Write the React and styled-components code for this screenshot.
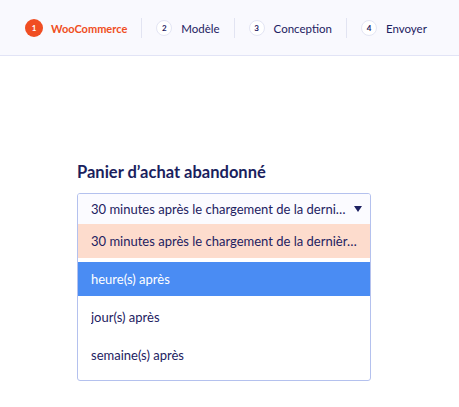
import React from "react";
import styled, { createGlobalStyle } from "styled-components";

const GlobalStyle = createGlobalStyle`
  body {
    margin: 0;
    background: #ffffff;
    font-family: Lato, "Liberation Sans", sans-serif;
    color: #1d2161;
  }
`;

const Page = styled.div`
  width: 459px;
  height: 407px;
  overflow: hidden;
`;

const Stepper = styled.nav`
  height: 56px;
  box-sizing: border-box;
  display: flex;
  align-items: center;
  padding: 1px 0 0 25px;
  background: #f9f9fe;
  border-bottom: 1px solid #e2e4f6;
`;

const Step = styled.div`
  display: flex;
  align-items: center;
  gap: ${({ $active }) => ($active ? "8px" : "9px")};
  font-size: ${({ $active }) => ($active ? "11px" : "11.5px")};
  font-weight: ${({ $active }) => ($active ? 700 : 400)};
  color: ${({ $active }) => ($active ? "#f04e23" : "#1d2161")};
`;

const Badge = styled.span`
  width: ${({ $active }) => ($active ? "18px" : "16px")};
  height: ${({ $active }) => ($active ? "18px" : "16px")};
  box-sizing: border-box;
  border-radius: 50%;
  display: flex;
  align-items: center;
  justify-content: center;
  font-size: 8px;
  font-weight: 700;
  background: ${({ $active }) => ($active ? "#f04e23" : "#ffffff")};
  color: ${({ $active }) => ($active ? "#ffffff" : "#1d2161")};
  border: ${({ $active }) => ($active ? "none" : "1.5px solid #e3e5f4")};
`;

const Divider = styled.span`
  width: 1px;
  height: 20px;
  margin: 0 14px;
  background: #e2e4f2;
`;

const Content = styled.main`
  padding: 106px 0 0 77px;
`;

const Title = styled.h2`
  margin: 0 0 11px;
  font-size: 16.5px;
  font-weight: 700;
  color: #1b1f5e;
`;

const Select = styled.div`
  width: 294px;
  box-sizing: border-box;
  border: 1px solid #b4c1ee;
  border-radius: 3px;
  overflow: hidden;
  padding-bottom: 8px;
  background: #ffffff;
`;

const Current = styled.div`
  height: 30px;
  display: flex;
  align-items: center;
  justify-content: space-between;
  padding: 0 8px 0 13px;
  background: #fbfbff;
  font-size: 13px;
`;

const Option = styled.div`
  height: 34px;
  display: flex;
  align-items: center;
  padding: 0 13px;
  margin-top: ${({ $first }) => ($first ? "0" : "4px")};
  font-size: 13px;
  background: ${({ $tone }) =>
    $tone === "selected" ? "#fddccd" : $tone === "hover" ? "#4a8cf3" : "transparent"};
  color: ${({ $tone }) => ($tone === "hover" ? "#ffffff" : "#1d2161")};
`;

const Label = styled.span`
  display: block;
  white-space: nowrap;
  overflow: hidden;
  text-overflow: ellipsis;
`;

const steps = ["WooCommerce", "Modèle", "Conception", "Envoyer"];

const options = [
  { label: "30 minutes après le chargement de la dernière page", tone: "selected" },
  { label: "heure(s) après", tone: "hover" },
  { label: "jour(s) après" },
  { label: "semaine(s) après" },
];

export default function App() {
  return (
    <Page>
      <GlobalStyle />
      <Stepper>
        {steps.map((name, i) => (
          <React.Fragment key={name}>
            {i > 0 && <Divider />}
            <Step $active={i === 0}>
              <Badge $active={i === 0}>{i + 1}</Badge>
              {name}
            </Step>
          </React.Fragment>
        ))}
      </Stepper>
      <Content>
        <Title>Panier d’achat abandonné</Title>
        <Select>
          <Current>
            <Label>30 minutes après le chargement de la dernière page</Label>
            <svg width="8" height="6" viewBox="0 0 8 6" style={{ flexShrink: 0, marginLeft: 5 }}>
              <path d="M0 0h8L4 6z" fill="#1d2161" />
            </svg>
          </Current>
          {options.map((o, i) => (
            <Option key={o.label} $tone={o.tone} $first={i === 0}>
              <Label>{o.label}</Label>
            </Option>
          ))}
        </Select>
      </Content>
    </Page>
  );
}
